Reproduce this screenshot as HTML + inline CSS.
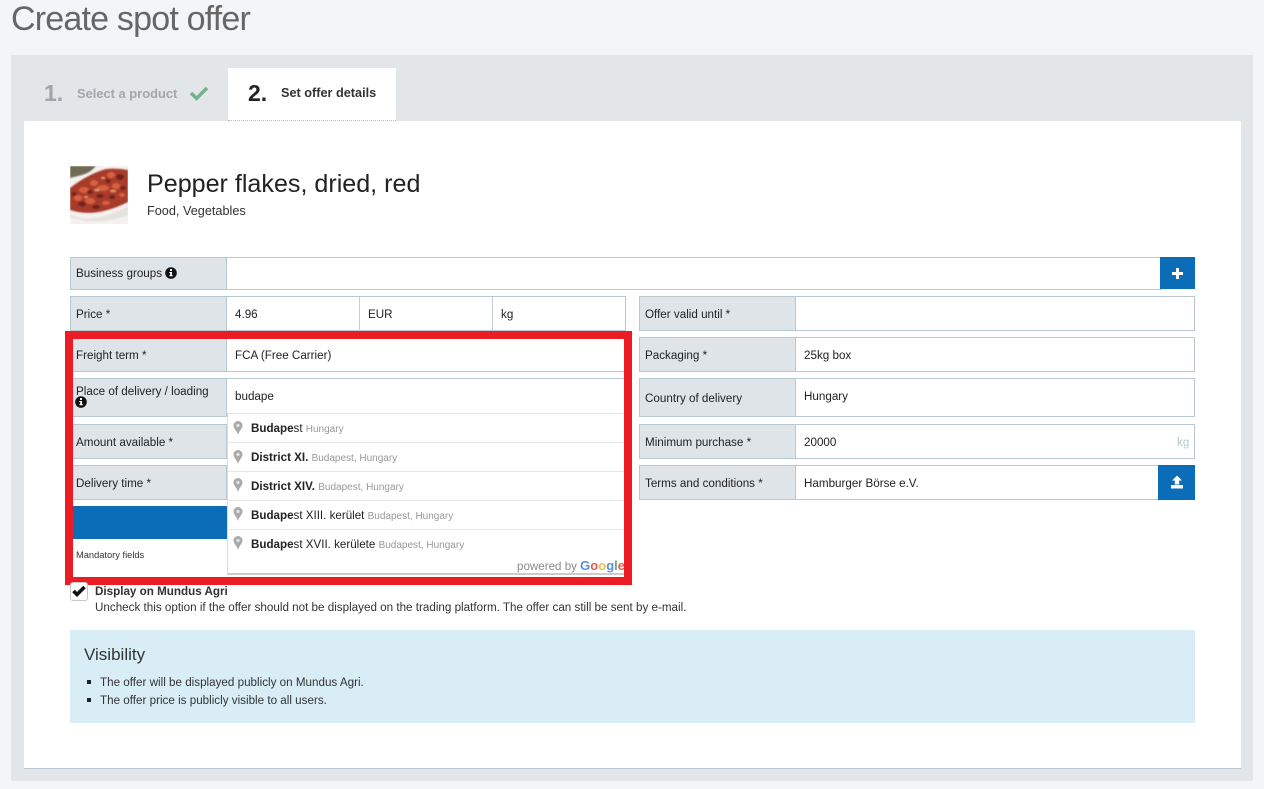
<!DOCTYPE html>
<html><head><meta charset="utf-8"><title>Create spot offer</title>
<style>
html,body{margin:0;padding:0}
body{width:1264px;height:789px;overflow:hidden;background:#f3f6f9;position:relative;font-family:"Liberation Sans",sans-serif;font-size:11.65px;color:#222}
.a{position:absolute;white-space:nowrap}
.box{position:absolute;box-sizing:border-box;border:1px solid #b9c7d1;background:#fff}
.lab{position:absolute;box-sizing:border-box;background:#dfe4e9;border:1px solid #b9c7d1;color:#222;padding-left:5px;padding-top:1px;white-space:nowrap}
.v{position:absolute;white-space:nowrap;color:#222;margin-top:1px}
.pin{position:absolute;left:233px}
.it{position:absolute;left:228px;width:396px;height:28px;border-top:1px solid #e6e6e6;background:#fff}
.mn{position:absolute;left:23px;top:8px;font-size:11.6px;color:#222;white-space:nowrap}
.mn b{font-weight:bold}
.mn i{font-style:normal;font-size:10px;color:#999}
</style></head><body>
<div class="a" style="left:11px;top:-2px;font-size:34px;line-height:42px;color:#666;letter-spacing:-.8px">Create spot offer</div>
<div class="a" style="left:11px;top:55px;width:1242px;height:726px;background:#e3e6e9"></div>
<div class="a" style="left:24px;top:121px;width:1217px;height:647px;background:#fff;border-bottom:1px solid #bccad5"></div>
<div class="a" style="left:228px;top:68px;width:168px;height:52px;background:#fff;border-bottom:1px dotted #bbb"></div>
<div class="a" style="left:44px;top:80px;font-size:23px;line-height:27px;font-weight:bold;color:#9fa4a8">1.</div>
<div class="a" style="left:77px;top:86px;font-size:12.9px;font-weight:bold;color:#a2a7ab">Select a product</div>
<svg class="a" style="left:189px;top:85px" width="20" height="16" viewBox="0 0 20 16"><path d="M2 8l5.500 5.500L18 3" fill="none" stroke="#73b08f" stroke-width="3.400"/></svg>
<div class="a" style="left:248px;top:80px;font-size:23px;line-height:27px;font-weight:bold;color:#222">2.</div>
<div class="a" style="left:281px;top:86px;font-size:12.7px;font-weight:bold;color:#333">Set offer details</div>

<svg class="a" style="left:70px;top:166px" width="58" height="58" viewBox="0 0 58 58">
<defs><filter id="bl" x="-10%" y="-10%" width="120%" height="120%"><feGaussianBlur stdDeviation=".9"/></filter></defs>
<rect width="58" height="58" fill="#f4f1ee"/>
<g filter="url(#bl)">
<path d="M0 0h26q-6 7-14 9l-12 3z" fill="#6f6a55"/>
<path d="M0 48q20 12 58-8v9q-30 12-58 2z" fill="#e6e2de"/>
<path d="M0 22Q18 8 36 3q12-1 22 1v32Q30 50 8 46L0 44z" fill="#a83a2a"/>
<g fill="#d8603c"><ellipse cx="14" cy="24" rx="5" ry="3"/><ellipse cx="24" cy="17" rx="4" ry="3"/><ellipse cx="33" cy="22" rx="6" ry="3"/><ellipse cx="41" cy="9" rx="4" ry="3"/><ellipse cx="8" cy="32" rx="4" ry="3"/><ellipse cx="20" cy="35" rx="5" ry="3"/><ellipse cx="46" cy="20" rx="4" ry="3"/><ellipse cx="36" cy="37" rx="4" ry="2"/><ellipse cx="52" cy="29" rx="3" ry="2"/></g>
<g fill="#6f221c"><ellipse cx="20" cy="26" rx="3" ry="2"/><ellipse cx="30" cy="30" rx="4" ry="2"/><ellipse cx="12" cy="38" rx="4" ry="2.500"/><ellipse cx="50" cy="11" rx="4" ry="3"/><ellipse cx="26" cy="41" rx="4" ry="2"/><ellipse cx="42" cy="31" rx="3" ry="2"/><ellipse cx="38" cy="15" rx="2.500" ry="2"/><ellipse cx="53" cy="22" rx="3" ry="2"/><ellipse cx="4" cy="28" rx="2.500" ry="2"/></g>
<g fill="#e39a70"><ellipse cx="27" cy="24" rx="3" ry="1.300"/><ellipse cx="43" cy="25" rx="3" ry="1.300"/><ellipse cx="16" cy="31" rx="2" ry="1"/><ellipse cx="33" cy="12" rx="2" ry="1"/></g>
</g></svg>
<div class="a" style="left:147px;top:169px;font-size:25.1px;line-height:30px;color:#222">Pepper flakes, dried, red</div>
<div class="a" style="left:147px;top:204px;font-size:12.7px;color:#333">Food, Vegetables</div>

<!-- Business groups -->
<div class="box" style="left:70px;top:257px;width:1092px;height:33px"></div>
<div class="lab" style="left:70px;top:257px;width:157px;height:33px;line-height:30px">Business groups</div>
<svg class="a" style="left:165px;top:267px" width="12" height="12" viewBox="0 0 12 12"><circle cx="6" cy="6" r="5.800" fill="#111"/><rect x="5" y="2" width="2" height="2" fill="#fff"/><path d="M4.300 5h2.700v3.300h.8v1H4.300v-1h.9V6h-.9z" fill="#fff"/></svg>
<div class="a" style="left:1160px;top:257px;width:35px;height:32px;background:#0b6cb8"></div>
<svg class="a" style="left:1171px;top:267px" width="13" height="13" viewBox="0 0 13 13"><path d="M5 1h3v4h4v3H8v4H5V8H1V5h4z" fill="#fff"/></svg>

<!-- left rows -->
<div class="box" style="left:70px;top:296px;width:556px;height:35px"></div>
<div class="lab" style="left:70px;top:296px;width:157px;height:35px;line-height:33px">Price *</div>
<div class="a" style="left:359px;top:297px;width:1px;height:34px;background:#c3cfd8"></div>
<div class="a" style="left:492px;top:297px;width:1px;height:34px;background:#c3cfd8"></div>
<div class="v" style="left:235px;top:307px">4.96</div>
<div class="v" style="left:368px;top:307px">EUR</div>
<div class="v" style="left:501px;top:307px">kg</div>

<div class="box" style="left:70px;top:338px;width:556px;height:34px"></div>
<div class="lab" style="left:70px;top:338px;width:157px;height:34px;line-height:32px">Freight term *</div>
<div class="v" style="left:235px;top:348px">FCA (Free Carrier)</div>

<div class="box" style="left:70px;top:378px;width:556px;height:39px"></div>
<div class="lab" style="left:70px;top:378px;width:157px;height:39px;padding-top:6px;line-height:14px">Place of delivery / loading</div>
<svg class="a" style="left:75px;top:396px" width="12" height="12" viewBox="0 0 12 12"><circle cx="6" cy="6" r="5.800" fill="#111"/><rect x="5" y="2" width="2" height="2" fill="#fff"/><path d="M4.300 5h2.700v3.300h.8v1H4.300v-1h.9V6h-.9z" fill="#fff"/></svg>
<div class="v" style="left:235px;top:389px">budape</div>

<div class="box" style="left:70px;top:424px;width:556px;height:35px"></div>
<div class="lab" style="left:70px;top:424px;width:157px;height:35px;line-height:33px">Amount available *</div>
<div class="box" style="left:70px;top:465px;width:556px;height:35px"></div>
<div class="lab" style="left:70px;top:465px;width:157px;height:35px;line-height:33px">Delivery time *</div>
<div class="a" style="left:73px;top:506px;width:155px;height:33px;background:#0b6cb8"></div>
<div class="a" style="left:76px;top:550px;font-size:9.3px;color:#333">Mandatory fields</div>

<!-- right rows -->
<div class="box" style="left:639px;top:296px;width:556px;height:35px"></div>
<div class="lab" style="left:639px;top:296px;width:157px;height:35px;line-height:33px">Offer valid until *</div>
<div class="box" style="left:639px;top:337px;width:556px;height:35px"></div>
<div class="lab" style="left:639px;top:337px;width:157px;height:35px;line-height:33px">Packaging *</div>
<div class="v" style="left:804px;top:348px">25kg box</div>
<div class="box" style="left:639px;top:378px;width:556px;height:39px"></div>
<div class="lab" style="left:639px;top:378px;width:157px;height:39px;line-height:37px">Country of delivery</div>
<div class="v" style="left:804px;top:389px">Hungary</div>
<div class="box" style="left:639px;top:424px;width:556px;height:35px"></div>
<div class="lab" style="left:639px;top:424px;width:157px;height:35px;line-height:33px">Minimum purchase *</div>
<div class="v" style="left:804px;top:435px">20000</div>
<div class="v" style="left:1177px;top:435px;color:#b7c6d0">kg</div>
<div class="box" style="left:639px;top:465px;width:556px;height:35px"></div>
<div class="lab" style="left:639px;top:465px;width:157px;height:35px;line-height:33px">Terms and conditions *</div>
<div class="v" style="left:804px;top:476px">Hamburger Börse e.V.</div>
<div class="a" style="left:1158px;top:465px;width:37px;height:35px;background:#0b6cb8"></div>
<svg class="a" style="left:1170px;top:475px" width="14" height="14" viewBox="0 0 14 14"><path d="M7 .5l5 5H9.200v4H4.800v-4H2zM1 10h12v3.500H1z" fill="#fff"/></svg>

<!-- dropdown -->
<div class="a" style="left:227px;top:413px;width:397px;height:162px;background:#fff;border-left:1px solid #ddd;border-bottom:2px solid #ccc;box-sizing:border-box"></div>
<div class="it" style="top:413px"><div class="mn"><b>Budape</b>st <i>Hungary</i></div></div>
<div class="it" style="top:442px"><div class="mn"><b>District XI.</b> <i>Budapest, Hungary</i></div></div>
<div class="it" style="top:471px"><div class="mn"><b>District XIV.</b> <i>Budapest, Hungary</i></div></div>
<div class="it" style="top:500px"><div class="mn"><b>Budape</b>st XIII. kerület <i>Budapest, Hungary</i></div></div>
<div class="it" style="top:529px"><div class="mn"><b>Budape</b>st XVII. kerülete <i>Budapest, Hungary</i></div></div>
<svg class="pin" style="top:421px" width="10" height="14" viewBox="0 0 10 14"><path d="M5 0a4.500 4.500 0 0 1 4.500 4.500C9.500 7.500 6 10 5 14 4 10 .5 7.500.5 4.500A4.500 4.500 0 0 1 5 0z" fill="#aaa"/><circle cx="5" cy="4.500" r="1.600" fill="#e4e4e4"/></svg>
<svg class="pin" style="top:450px" width="10" height="14" viewBox="0 0 10 14"><path d="M5 0a4.500 4.500 0 0 1 4.500 4.500C9.500 7.500 6 10 5 14 4 10 .5 7.500.5 4.500A4.500 4.500 0 0 1 5 0z" fill="#aaa"/><circle cx="5" cy="4.500" r="1.600" fill="#e4e4e4"/></svg>
<svg class="pin" style="top:478px" width="10" height="14" viewBox="0 0 10 14"><path d="M5 0a4.500 4.500 0 0 1 4.500 4.500C9.500 7.500 6 10 5 14 4 10 .5 7.500.5 4.500A4.500 4.500 0 0 1 5 0z" fill="#aaa"/><circle cx="5" cy="4.500" r="1.600" fill="#e4e4e4"/></svg>
<svg class="pin" style="top:507px" width="10" height="14" viewBox="0 0 10 14"><path d="M5 0a4.500 4.500 0 0 1 4.500 4.500C9.500 7.500 6 10 5 14 4 10 .5 7.500.5 4.500A4.500 4.500 0 0 1 5 0z" fill="#aaa"/><circle cx="5" cy="4.500" r="1.600" fill="#e4e4e4"/></svg>
<svg class="pin" style="top:536px" width="10" height="14" viewBox="0 0 10 14"><path d="M5 0a4.500 4.500 0 0 1 4.500 4.500C9.500 7.500 6 10 5 14 4 10 .5 7.500.5 4.500A4.500 4.500 0 0 1 5 0z" fill="#aaa"/><circle cx="5" cy="4.500" r="1.600" fill="#e4e4e4"/></svg>
<div class="a" style="left:517px;top:558px;font-size:11.6px;color:#8a8a8a;width:107px;overflow:hidden">powered by <span style="font-weight:bold;font-size:13px"><span style="color:#5b8fe0">G</span><span style="color:#e06050">o</span><span style="color:#e8c050">o</span><span style="color:#5b8fe0">g</span><span style="color:#60b070">l</span><span style="color:#e06050">e</span></span></div>

<!-- red frame -->
<div class="a" style="left:65px;top:331px;width:567px;height:254px;box-sizing:border-box;border:8px solid #ec1c24"></div>

<!-- checkbox -->
<div class="a" style="left:70px;top:582px;width:18px;height:19px;box-sizing:border-box;background:#fff;border:1px solid #c5c9cc;border-radius:3px"></div>
<svg class="a" style="left:71px;top:584px" width="16" height="14" viewBox="0 0 16 14"><path d="M2.500 7l3.500 3.500 7.500-7.500" fill="none" stroke="#111" stroke-width="3.600"/></svg>
<div class="a" style="left:95px;top:585px;font-weight:bold;color:#333">Display on Mundus Agri</div>
<div class="a" style="left:95px;top:601px;color:#333">Uncheck this option if the offer should not be displayed on the trading platform. The offer can still be sent by e-mail.</div>

<!-- visibility -->
<div class="a" style="left:70px;top:630px;width:1125px;height:93px;background:#d9edf7"></div>
<div class="a" style="left:84px;top:645px;font-size:17px;line-height:20px;color:#333">Visibility</div>
<div class="a" style="left:87px;top:680px;width:4px;height:4px;background:#222"></div>
<div class="a" style="left:100px;top:676px;color:#333">The offer will be displayed publicly on Mundus Agri.</div>
<div class="a" style="left:87px;top:698px;width:4px;height:4px;background:#222"></div>
<div class="a" style="left:100px;top:694px;color:#333">The offer price is publicly visible to all users.</div>
</body></html>
